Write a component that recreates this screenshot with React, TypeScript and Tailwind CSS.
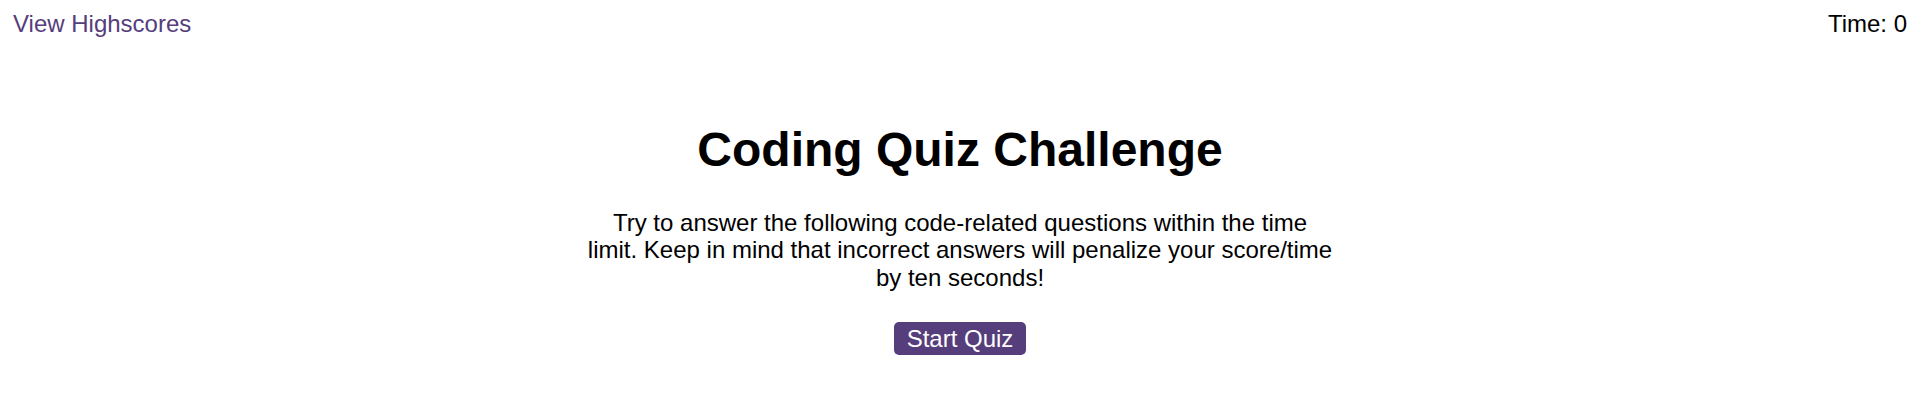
import React from "react";

export default function App() {
  return (
    <div className="min-h-[409px] bg-white text-black" style={{ fontFamily: '"Liberation Sans", Arial, sans-serif' }}>
      <header className="flex justify-between px-[13px] pt-[10px] text-[24px] leading-[1.15]">
        <a href="#" className="text-[#563d7c] no-underline">View Highscores</a>
        <div>Time: 0</div>
      </header>
      <main className="flex flex-col items-center pt-[84px]">
        <h1 className="text-[48px] font-bold leading-[1.15] m-0">Coding Quiz Challenge</h1>
        <p className="mt-[32px] max-w-[750px] text-center text-[24px] leading-[1.15]">
          Try to answer the following code-related questions within the time limit. Keep in mind that incorrect answers will penalize your score/time by ten seconds!
        </p>
        <button className="mt-[30px] rounded-[5px] bg-[#563d7c] px-[13px] py-[3px] text-[24px] leading-[1.15] text-white">
          Start Quiz
        </button>
      </main>
    </div>
  );
}
